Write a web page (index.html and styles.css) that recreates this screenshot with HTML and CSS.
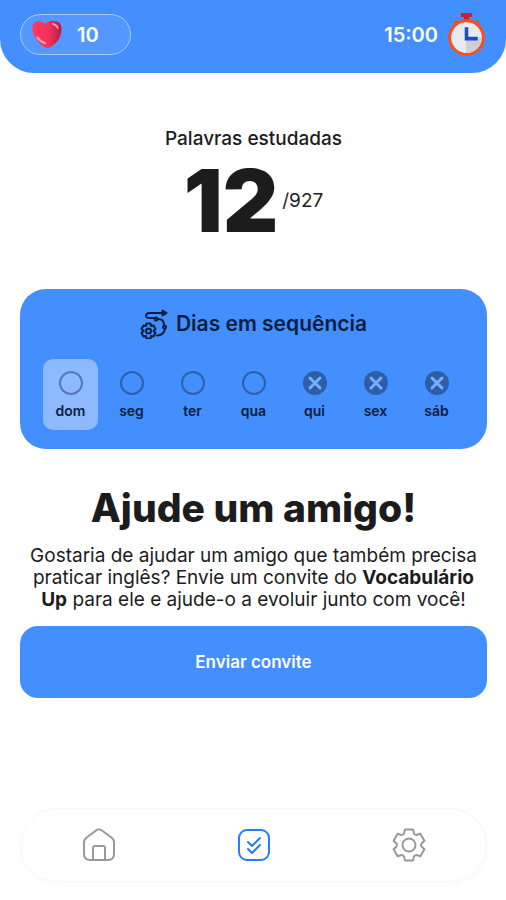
FILE: index.html
```html
<!DOCTYPE html>
<html lang="pt-BR">
<head>
<meta charset="utf-8">
<meta name="viewport" content="width=device-width, initial-scale=1">
<title>Vocabulário Up</title>
<link rel="stylesheet" href="styles.css">
</head>
<body>
<header class="topbar">
  <div class="lives">
    <svg class="heart" viewBox="0 0 32 30" aria-hidden="true">
      <defs><linearGradient id="heart-fill" x1="0" x2="1"><stop offset="0" stop-color="#fb3a62"/><stop offset=".55" stop-color="#f5315c"/><stop offset="1" stop-color="#b41b45"/></linearGradient></defs>
      <path fill="url(#heart-fill)" d="M14 4C10 .5 4 .5 2 4C-.5 9 1 15 5 20C8 24 12 28 16 29C20 28.500 25 25 28 20C31 15 32.500 7 29 3C25 0 18 0 14 4Z"/>
      <path fill="none" stroke="#ff9db3" stroke-width="2" stroke-linecap="round" d="M6 18Q9 22.500 14 24M22 4Q26 5 27 8"/>
    </svg>
    <span>10</span>
  </div>
  <div class="timer">
    <span>15:00</span>
    <svg class="stopwatch" viewBox="0 0 38 44" aria-hidden="true">
      <path fill="#c8202c" d="M14 1h11v4h-3v4h-5V5h-3z"/>
      <path stroke="#f04a24" stroke-width="4" d="M8 9l4 4M31 9l-4 4"/>
      <circle cx="19.500" cy="25" r="16.500" fill="#e9eaf1" stroke="#f4511e" stroke-width="3"/>
      <path fill="#cfd0d6" d="M19 25h15.500a15 15 0 0 1-15.500 15z"/>
      <path fill="none" stroke="#1b50bd" stroke-width="3.500" d="M19.500 15v11h11"/>
    </svg>
  </div>
</header>

<main class="content">
  <section class="studied">
    <h2 class="studied-label">Palavras estudadas</h2>
    <p class="score"><strong>12</strong><span>/927</span></p>
  </section>

  <section class="streak">
    <h2 class="streak-title">
      <svg class="streak-icon" viewBox="0 0 28 30" aria-hidden="true">
        <g fill="none" stroke="#0b1e3e" stroke-width="2" stroke-linecap="round" stroke-linejoin="round">
          <path d="M16 9H10Q6 9 6 6.500T10 4H26M22.500 1.500V6.500L26.500 4Z"/>
          <circle cx="16" cy="10" r="1.500"/>
          <path d="M18 10Q24 10 24 16"/>
          <circle cx="24.500" cy="18" r="1.500"/>
          <path d="M25 20Q24 26 17 26.500"/>
        </g>
        <g fill="none" stroke="#0b1e3e" stroke-width="2" stroke-linejoin="round">
          <path d="M6.500 14.500h4l.5 2.500 2.500-.5 2 3.500-2 2 2 2-2 3.500-2.500-.5-.5 2.500h-4L6 27l-2.500.5-2-3.500 2-2-2-2 2-3.500L6 17z"/>
          <circle cx="8.500" cy="22" r="2.500"/>
        </g>
      </svg>
      Dias em sequência
    </h2>
    <ol class="days">
      <li class="day today"><span class="mark"></span>dom</li>
      <li class="day"><span class="mark"></span>seg</li>
      <li class="day"><span class="mark"></span>ter</li>
      <li class="day"><span class="mark"></span>qua</li>
      <li class="day"><svg class="missed" viewBox="0 0 24 24" aria-hidden="true"><circle cx="12" cy="12" r="12"/><path d="M7 7l10 10M17 7L7 17"/></svg>qui</li>
      <li class="day"><svg class="missed" viewBox="0 0 24 24" aria-hidden="true"><circle cx="12" cy="12" r="12"/><path d="M7 7l10 10M17 7L7 17"/></svg>sex</li>
      <li class="day"><svg class="missed" viewBox="0 0 24 24" aria-hidden="true"><circle cx="12" cy="12" r="12"/><path d="M7 7l10 10M17 7L7 17"/></svg>sáb</li>
    </ol>
  </section>

  <section class="invite">
    <h1 class="invite-title">Ajude um amigo!</h1>
    <p class="invite-text">Gostaria de ajudar um amigo que também precisa praticar inglês? Envie um convite do <strong>Vocabulário Up</strong> para ele e ajude-o a evoluir junto com você!</p>
    <button class="invite-button" type="button">Enviar convite</button>
  </section>
</main>

<nav class="tabs">
  <a class="tab" href="#inicio" aria-label="Início">
    <svg viewBox="0 0 34 34" aria-hidden="true"><path d="M2 14Q2 12 4 10L14 2.500Q17 0 20 2.500L30 10Q32 12 32 14V26Q32 32 26 32H8Q2 32 2 26ZM11 32V20Q11 18 13 18H21Q23 18 23 20V32"/></svg>
  </a>
  <a class="tab active" href="#progresso" aria-label="Progresso" aria-current="page">
    <svg viewBox="0 0 34 34" aria-hidden="true"><rect x="2" y="2" width="30" height="30" rx="8"/><path d="M11 14l4 4 8-8M11 21l4 4 8-8"/></svg>
  </a>
  <a class="tab" href="#ajustes" aria-label="Ajustes">
    <svg viewBox="-17 -17 34 34" aria-hidden="true"><path d="M-4-15.500H4L5-11.500Q6-10 7.500-10L11.400-11.200L15.400-4.300L12.500-1.500Q11.500 0 12.500 1.500L15.400 4.300L11.400 11.200L7.500 10Q6 10 5 11.500L4 15.500H-4L-5 11.500Q-6 10-7.500 10L-11.400 11.200L-15.400 4.300L-12.500 1.500Q-11.500 0-12.500-1.500L-15.400-4.300L-11.400-11.200L-7.500-10Q-6-10-5-11.500Z"/><circle r="6.500"/></svg>
  </a>
</nav>
</body>
</html>
```
FILE: styles.css
```css
* {
  box-sizing: border-box;
}

body {
  margin: 0;
  min-height: 100vh;
  display: flex;
  flex-direction: column;
  background: #fff;
  color: #1c1c1c;
  font-family: Inter, "Liberation Sans", sans-serif;
}

h1, h2, p, ol {
  margin: 0;
  padding: 0;
}

.topbar {
  display: flex;
  justify-content: space-between;
  align-items: center;
  padding: 14px 20px 18px;
  border-radius: 0 0 34px 34px;
  background: #448fff;
  color: #fff;
  font-size: 20px;
  font-weight: 600;
  line-height: 24px;
}

.lives {
  display: flex;
  align-items: center;
  gap: 14px;
  padding: 5px 31px 5px 10px;
  border: 1px solid #a5caff;
  border-radius: 24px;
  background: #5498ff;
}

.heart {
  width: 32px;
  height: 29px;
}

.timer {
  display: flex;
  align-items: center;
  gap: 8px;
  margin: -2px 0;
}

.stopwatch {
  width: 40px;
  height: 45px;
}

.content {
  flex: 1;
  padding: 0 19px 0 20px;
}

.studied {
  padding: 55px 0 40px;
  text-align: center;
}

.studied-label {
  font-size: 19px;
  font-weight: 500;
  line-height: 22px;
}

.score {
  display: flex;
  justify-content: center;
  align-items: center;
  gap: 4px;
  margin-top: 3px;
  font-size: 19px;
  line-height: 96px;
}

.score strong {
  font-size: 86px;
  font-weight: 900;
}

.streak {
  padding: 20px 20px 19px;
  border-radius: 26px;
  background: #448fff;
}

.streak-title {
  display: flex;
  justify-content: center;
  align-items: center;
  gap: 8px;
  color: #0b1e3e;
  font-size: 21px;
  font-weight: 600;
  line-height: 30px;
}

.streak-icon {
  width: 28px;
  height: 30px;
}

.days {
  display: grid;
  grid-template-columns: repeat(7, 1fr);
  margin-top: 20px;
  list-style: none;
}

.day {
  display: flex;
  flex-direction: column;
  align-items: center;
  gap: 8px;
  margin: 0 3px;
  padding: 12px 0 11px;
  border-radius: 10px;
  color: #0b1e3e;
  font-size: 14px;
  font-weight: 600;
  line-height: 16px;
}

.today {
  background: #8db9ff;
}

.mark {
  width: 24px;
  height: 24px;
  border: 2px solid #2c60ad;
  border-radius: 50%;
}

.today .mark {
  border-color: #557ab3;
}

.missed {
  width: 24px;
  height: 24px;
  fill: #2d5ea7;
  stroke-linecap: round;
}

.missed path {
  stroke: #77afff;
  stroke-width: 3;
}

.invite {
  padding-top: 36px;
  text-align: center;
}

.invite-title {
  font-size: 39px;
  font-weight: 800;
  line-height: 46px;
}

.invite-text {
  margin-top: 14px;
  padding: 0 8px;
  font-size: 19px;
  line-height: 22px;
}

.invite-button {
  display: block;
  width: 100%;
  margin-top: 15px;
  padding: 24px;
  border: 0;
  border-radius: 18px;
  background: #448fff;
  color: #fff;
  font: inherit;
  font-size: 17px;
  font-weight: 600;
  line-height: 24px;
}

.tabs {
  display: flex;
  margin: 0 19px 18px 20px;
  padding: 19px 0;
  border: 1px solid #f7f7f7;
  border-radius: 38px;
  box-shadow: 0 2px 6px rgba(0, 0, 0, 0.02);
}

.tab {
  flex: 1;
  display: flex;
  justify-content: center;
  color: #999;
}

.tab svg {
  width: 34px;
  height: 34px;
  fill: none;
  stroke: currentColor;
  stroke-width: 2;
  stroke-linecap: round;
  stroke-linejoin: round;
}

.active {
  color: #247cff;
}
```
